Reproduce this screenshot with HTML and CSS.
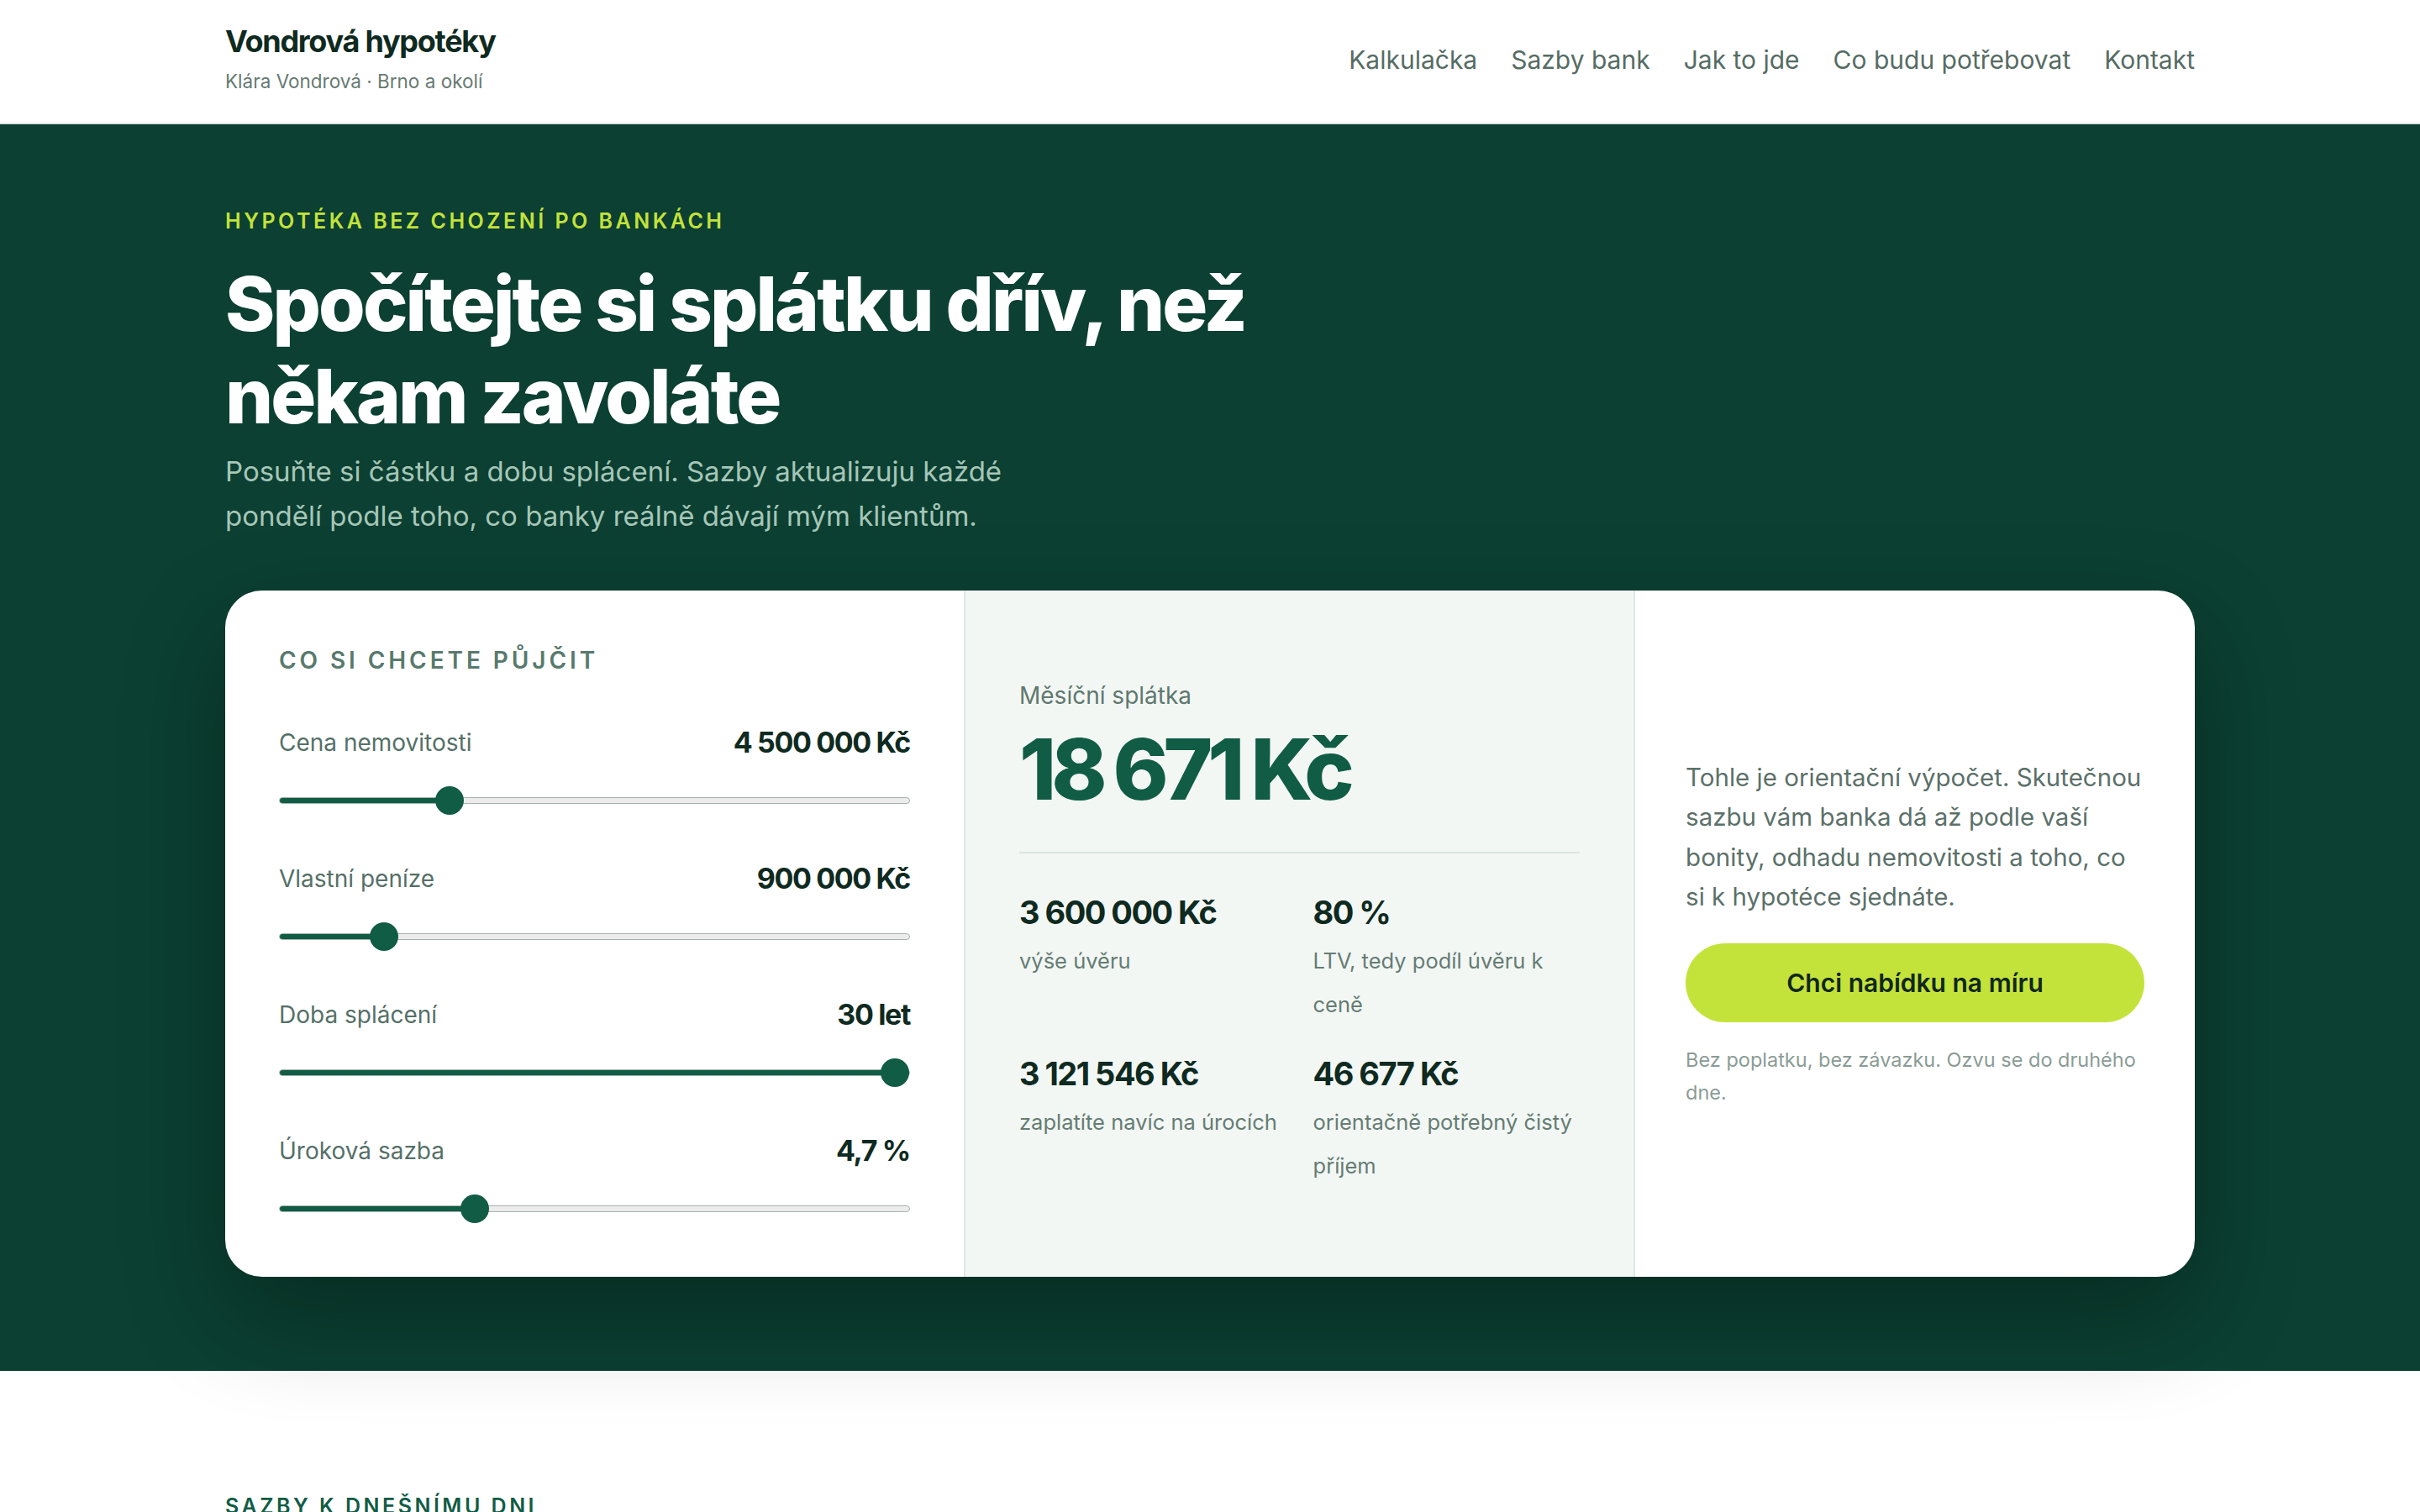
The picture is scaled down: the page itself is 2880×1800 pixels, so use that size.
FILE: index.html
```html
<!DOCTYPE html>
<html lang="cs">

<head>
  <meta charset="UTF-8">
  <meta name="viewport" content="width=device-width, initial-scale=1.0">
  <title>Vondrová hypotéky - Kalkulačka</title>
  <link rel="stylesheet" href="styles.css">
</head>

<body>
  <header class="site-header">
    <div class="wrap header-inner">
      <a href="#" class="brand">
        <div class="brand-name">Vondrová hypotéky</div>
        <div class="brand-sub">Klára Vondrová · Brno a okolí</div>
      </a>
      <nav class="main-nav">
        <a href="#kalkulacka">Kalkulačka</a>
        <a href="#sazby">Sazby bank</a>
        <a href="#postup">Jak to jde</a>
        <a href="#doklady">Co budu potřebovat</a>
        <a href="#kontakt">Kontakt</a>
      </nav>
    </div>
  </header>

  <section class="hero" id="kalkulacka">
    <div class="wrap">
      <p class="eyebrow">Hypotéka bez chození po bankách</p>
      <h1>Spočítejte si splátku dřív, než někam zavoláte</h1>
      <p class="hero-lead">Posuňte si částku a dobu splácení. Sazby aktualizuju každé pondělí podle toho, co banky reálně dávají mým klientům.</p>

      <div class="calc">
        <!-- inputs -->
        <div class="calc-inputs">
          <h2 class="calc-title">Co si chcete půjčit</h2>
          <div class="fields">
            <div class="field">
              <div class="field-head">
                <label class="field-label" for="price">Cena nemovitosti</label>
                <span class="field-value" id="price-out">4&nbsp;500&nbsp;000&nbsp;Kč</span>
              </div>
              <input type="range" id="price" min="1000000" max="14500000" step="100000" value="4500000" style="--fill: 27%">
            </div>
            <div class="field">
              <div class="field-head">
                <label class="field-label" for="own">Vlastní peníze</label>
                <span class="field-value" id="own-out">900&nbsp;000&nbsp;Kč</span>
              </div>
              <input type="range" id="own" min="0" max="6000000" step="50000" value="900000" style="--fill: 16.6%">
            </div>
            <div class="field">
              <div class="field-head">
                <label class="field-label" for="years">Doba splácení</label>
                <span class="field-value" id="years-out">30 let</span>
              </div>
              <input type="range" id="years" min="5" max="30" step="1" value="30" style="--fill: 100%">
            </div>
            <div class="field">
              <div class="field-head">
                <label class="field-label" for="rate">Úroková sazba</label>
                <span class="field-value" id="rate-out">4,7&nbsp;%</span>
              </div>
              <input type="range" id="rate" min="2" max="11" step="0.1" value="4.7" style="--fill: 30.9%">
            </div>
          </div>
        </div>

        <!-- result -->
        <div class="calc-result">
          <div class="result-label">Měsíční splátka</div>
          <div class="result-amount" id="payment">18&nbsp;671&nbsp;Kč</div>
          <hr class="result-divider">
          <div class="stats">
            <div class="stat">
              <div class="stat-value" id="loan">3&nbsp;600&nbsp;000&nbsp;Kč</div>
              <div class="stat-label">výše úvěru</div>
            </div>
            <div class="stat">
              <div class="stat-value" id="ltv">80&nbsp;%</div>
              <div class="stat-label">LTV, tedy podíl úvěru k ceně</div>
            </div>
            <div class="stat">
              <div class="stat-value" id="interest">3&nbsp;121&nbsp;546&nbsp;Kč</div>
              <div class="stat-label">zaplatíte navíc na úrocích</div>
            </div>
            <div class="stat">
              <div class="stat-value" id="income">46&nbsp;677&nbsp;Kč</div>
              <div class="stat-label">orientačně potřebný čistý příjem</div>
            </div>
          </div>
        </div>

        <!-- call to action -->
        <div class="calc-cta">
          <p class="cta-text">Tohle je orientační výpočet. Skutečnou sazbu vám banka dá až podle vaší bonity, odhadu nemovitosti a toho, co si k hypotéce sjednáte.</p>
          <a href="#kontakt" class="cta-button">Chci nabídku na míru</a>
          <p class="cta-note">Bez poplatku, bez závazku. Ozvu se do druhého dne.</p>
        </div>
      </div>
    </div>
  </section>

  <section class="rates" id="sazby">
    <div class="wrap">
      <p class="eyebrow eyebrow-dark">Sazby k dnešnímu dni</p>
      <h2 class="section-title">Kolik banky opravdu nabízejí</h2>
      <table class="rates-table">
        <tr><th>Banka</th><th>Fixace 3 roky</th><th>Fixace 5 let</th></tr>
        <tr><td>Česká spořitelna</td><td>4,79 %</td><td>4,69 %</td></tr>
        <tr><td>ČSOB</td><td>4,74 %</td><td>4,64 %</td></tr>
        <tr><td>Komerční banka</td><td>4,89 %</td><td>4,79 %</td></tr>
      </table>
    </div>
  </section>

  <script>
    // Recalculate the payment when a slider moves
    const THUMB = 34;
    const fmt = n => Math.round(n).toLocaleString("cs-CZ") + "\u00a0Kč";
    const el = id => document.getElementById(id);

    // Paint the filled part of the track up to the thumb centre
    function setFill(input) {
      const p = (input.value - input.min) / (input.max - input.min);
      const w = input.clientWidth;
      const px = THUMB / 2 + p * (w - THUMB);
      input.style.setProperty("--fill", (px / w * 100).toFixed(1) + "%");
    }

    function update() {
      const price = +el("price").value;
      const own = Math.min(+el("own").value, price);
      const years = +el("years").value;
      const rate = +el("rate").value;

      const loan = price - own;
      const r = rate / 100 / 12;
      const n = years * 12;
      const payment = loan * r / (1 - Math.pow(1 + r, -n));

      el("price-out").textContent = fmt(price);
      el("own-out").textContent = fmt(own);
      el("years-out").textContent = years + " let";
      el("rate-out").textContent = rate.toLocaleString("cs-CZ") + "\u00a0%";
      el("payment").textContent = fmt(payment);
      el("loan").textContent = fmt(loan);
      el("ltv").textContent = Math.round(loan / price * 100) + "\u00a0%";
      el("interest").textContent = fmt(payment * n - loan);
      el("income").textContent = fmt(payment / 0.4);
    }

    document.querySelectorAll(".field input").forEach(input => {
      input.addEventListener("input", function () {
        setFill(this);
        update();
      });
    });
  </script>
</body>

</html>
```

FILE: styles.css
```css
* {
  margin: 0;
  padding: 0;
  box-sizing: border-box;
}

body {
  font-family: Inter, "Noto Sans", sans-serif;
  color: #0f2a20;
  background-color: #fff;
}

.wrap {
  max-width: 2440px;
  margin: 0 auto;
  padding: 0 48px;
}

/* Header */
.site-header {
  background-color: #fff;
  border-bottom: 2px solid #dde7e2;
}

.header-inner {
  display: flex;
  justify-content: space-between;
  align-items: center;
  padding-top: 28px;
  padding-bottom: 32px;
}

.brand {
  text-decoration: none;
}

.brand-name {
  font-size: 36px;
  font-weight: 700;
  line-height: 1.2;
  letter-spacing: -0.035em;
  color: #0f2a20;
}

.brand-sub {
  margin-top: 9px;
  font-size: 22.5px;
  line-height: 1.5;
  color: #667a72;
}

.main-nav {
  display: flex;
  gap: 40px;
}

.main-nav a {
  font-size: 30px;
  color: #566c64;
  text-decoration: none;
}

.main-nav a:hover {
  color: #0f2a20;
}

/* Hero */
.hero {
  background-color: #0b4032;
  padding: 98px 0 112px;
}

.eyebrow {
  font-size: 25px;
  font-weight: 600;
  line-height: 1.4;
  letter-spacing: 0.14em;
  text-transform: uppercase;
  color: #c4e23a;
}

.hero h1 {
  margin-top: 26px;
  max-width: 1400px;
  font-size: 90px;
  font-weight: 800;
  line-height: 1.22;
  letter-spacing: -0.032em;
  color: #fff;
}

.hero-lead {
  margin-top: 8px;
  max-width: 1000px;
  font-size: 33px;
  line-height: 1.61;
  color: #a7c6b8;
}

/* Calculator card */
.calc {
  position: relative;
  z-index: 1;
  margin-top: 62px;
  display: grid;
  grid-template-columns: 1.32fr 1.2fr 1fr;
  background-color: #fff;
  border-radius: 44px;
  overflow: hidden;
  box-shadow: 0 48px 120px rgba(0, 0, 0, 0.3);
}

.calc-inputs {
  padding: 64px;
}

.calc-title {
  font-size: 28px;
  font-weight: 600;
  line-height: 1.4;
  letter-spacing: 0.14em;
  text-transform: uppercase;
  color: #587a6d;
}

.fields {
  margin-top: 54px;
  display: flex;
  flex-direction: column;
  gap: 52px;
}

.field-head {
  display: flex;
  justify-content: space-between;
  align-items: center;
  height: 48px;
}

.field-label {
  font-size: 28px;
  color: #557068;
}

.field-value {
  font-size: 34px;
  font-weight: 700;
  letter-spacing: -0.04em;
  white-space: nowrap;
  color: #0f2a20;
}

/* Range slider */
.field input {
  -webkit-appearance: none;
  appearance: none;
  display: block;
  width: 100%;
  height: 34px;
  margin-top: 28px;
  background: transparent;
  cursor: pointer;
}

.field input::-webkit-slider-runnable-track {
  height: 8px;
  border: 1px solid #aab1ad;
  border-radius: 6px;
  background: linear-gradient(to right, #115c45 var(--fill), #ececec var(--fill));
}

.field input::-webkit-slider-thumb {
  -webkit-appearance: none;
  width: 34px;
  height: 34px;
  margin-top: -14px;
  border-radius: 50%;
  background-color: #115c45;
}

.calc-result {
  padding: 64px;
  display: flex;
  flex-direction: column;
  justify-content: center;
  background-color: #f2f7f4;
  border-left: 2px solid #dfe8e3;
  border-right: 2px solid #dfe8e3;
}

.result-label {
  font-size: 28px;
  line-height: 40px;
  color: #5f786f;
}

.result-amount {
  margin-top: 18px;
  font-size: 100px;
  font-weight: 800;
  line-height: 1;
  letter-spacing: -0.06em;
  word-spacing: -0.03em;
  white-space: nowrap;
  color: #115c45;
}

.result-divider {
  margin: 48px 0 46px;
  border: none;
  border-top: 2px solid #dce5e0;
}

.stats {
  display: grid;
  grid-template-columns: 1fr 1fr;
  gap: 32px;
}

.stat-value {
  font-size: 38px;
  font-weight: 700;
  line-height: 48px;
  letter-spacing: -0.04em;
  white-space: nowrap;
  color: #0f2a20;
}

.stat-label {
  margin-top: 8px;
  font-size: 25.5px;
  line-height: 52px;
  color: #667c73;
}

.calc-cta {
  padding: 64px 60px;
  display: flex;
  flex-direction: column;
  justify-content: center;
}

.cta-text {
  font-size: 29.5px;
  line-height: 1.6;
  color: #5b7069;
}

.cta-button {
  display: block;
  margin-top: 32px;
  height: 94px;
  line-height: 94px;
  border-radius: 999px;
  background-color: #c4e33a;
  color: #10271d;
  font-size: 30px;
  font-weight: 600;
  text-align: center;
  text-decoration: none;
}

.cta-button:hover {
  background-color: #b6d62c;
}

.cta-note {
  margin-top: 26px;
  font-size: 23.5px;
  line-height: 1.65;
  color: #8a9c95;
}

/* Rates section */
.rates {
  padding: 144px 0 160px;
}

.eyebrow-dark {
  color: #115c45;
}

.section-title {
  margin-top: 24px;
  font-size: 64px;
  font-weight: 700;
  letter-spacing: -0.03em;
}

.rates-table {
  margin-top: 48px;
  width: 100%;
  border-collapse: collapse;
  font-size: 30px;
}

.rates-table th,
.rates-table td {
  padding: 28px 0;
  text-align: left;
  border-bottom: 2px solid #e3ebe6;
}

.rates-table th {
  font-size: 26px;
  font-weight: 600;
  color: #667c73;
}
```
